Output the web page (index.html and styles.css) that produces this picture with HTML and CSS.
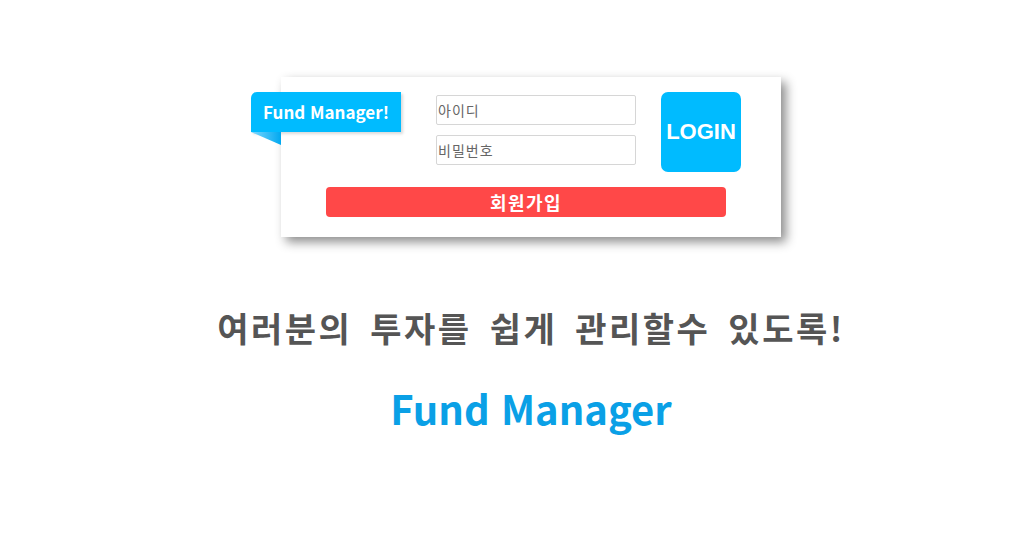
FILE: index.html
```html
<!DOCTYPE html>
<html lang="ko">
<head>
<meta charset="utf-8">
<link rel="stylesheet" href="styles.css">
<title>Fund Manager</title>
</head>
<body>
<div class="page">
  <div class="login-box">
    <div class="ribbon">Fund Manager!</div>
    <div class="row">
      <div class="fields">
        <input class="field" type="text" placeholder="아이디">
        <input class="field" type="password" placeholder="비밀번호">
      </div>
      <button class="login-btn">LOGIN</button>
    </div>
    <button class="signup-btn">회원가입</button>
  </div>
  <h1 class="headline">여러분의 투자를 쉽게 관리할수 있도록!</h1>
  <h2 class="brand">Fund Manager</h2>
</div>
</body>
</html>
```
FILE: styles.css
```css
html, body {
  margin: 0;
  padding: 0;
  background: #fff;
}
body {
  font-family: "Noto Sans CJK KR", "Noto Sans", sans-serif;
}
.page {
  padding-left: 36px;
  padding-top: 77px;
  display: flex;
  flex-direction: column;
  align-items: center;
}
.login-box {
  position: relative;
  width: 500px;
  height: 160px;
  box-sizing: border-box;
  padding-top: 15px;
  background: #fff;
  box-shadow: 5px 5px 10px rgba(0, 0, 0, 0.45);
}
.ribbon {
  position: absolute;
  left: -30px;
  top: 15px;
  width: 150px;
  height: 40px;
  background: #00bbff;
  color: #fff;
  font-weight: 700;
  font-size: 17px;
  line-height: 40px;
  text-align: center;
  border-top-left-radius: 6px;
  box-shadow: 2px 2px 3px rgba(0, 0, 0, 0.15);
}
.ribbon::after {
  content: "";
  position: absolute;
  left: 0;
  top: 40px;
  width: 30px;
  height: 13px;
  background: linear-gradient(to right, #7fd8ff, #00a8f0);
  clip-path: polygon(0 0, 100% 0, 100% 100%);
}
.row {
  display: flex;
  align-items: flex-start;
  margin-left: 155px;
}
.fields {
  display: flex;
  flex-direction: column;
  gap: 10px;
  margin-top: 3px;
}
.field {
  width: 200px;
  height: 30px;
  box-sizing: border-box;
  border: 1px solid #d6d6d6;
  border-radius: 2px;
  padding: 0 1px;
  font-family: "Noto Sans CJK KR", "Noto Sans", sans-serif;
  font-size: 14px;
  letter-spacing: 1px;
  color: #555;
  outline: none;
}
.field::placeholder {
  color: #666;
}
.login-btn {
  width: 80px;
  height: 80px;
  margin-left: 25px;
  border: none;
  border-radius: 7px;
  background: #00bbff;
  color: #fff;
  font-family: "Liberation Sans", Arial, sans-serif;
  font-weight: 700;
  font-size: 22px;
  padding: 0;
}
.signup-btn {
  display: block;
  width: 400px;
  height: 30px;
  margin: 15px 0 0 45px;
  border: none;
  border-radius: 4px;
  background: #ff4848;
  color: #fff;
  font-family: "Noto Sans CJK KR", "Noto Sans", sans-serif;
  font-weight: 700;
  font-size: 18px;
  letter-spacing: 1.5px;
  padding: 0;
}
.headline {
  margin: 67px 0 0;
  font-size: 34px;
  line-height: 48px;
  font-weight: 700;
  letter-spacing: 2.5px;
  word-spacing: 6px;
  color: #555;
}
.brand {
  margin: 26px 0 0;
  font-size: 40px;
  line-height: 60px;
  font-weight: 600;
  color: #0aa0e6;
}
```
